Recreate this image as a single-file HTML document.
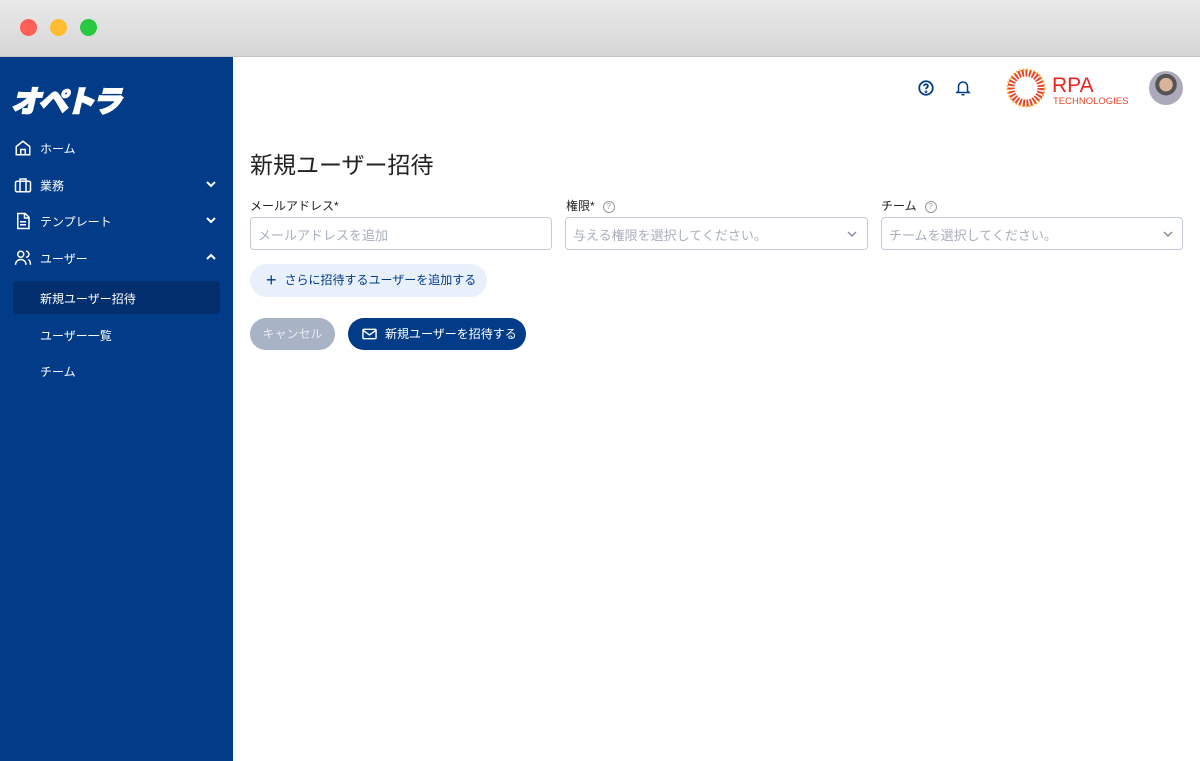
<!DOCTYPE html>
<html><head><meta charset="utf-8"><style>
*{box-sizing:border-box;margin:0;padding:0}
body{width:1200px;height:761px;overflow:hidden;background:#fff;font-family:"Liberation Sans","Noto Sans CJK JP",sans-serif;position:relative}
.bar{position:absolute;left:0;top:0;width:1200px;height:57px;background:linear-gradient(#e9e9e9,#d6d6d6);border-bottom:1px solid #c4c4c4}
.dot{position:absolute;top:19px;width:17px;height:17px;border-radius:50%}
.side{position:absolute;left:0;top:57px;width:233px;height:704px;background:#023c89}
.nav{position:absolute;left:14px;color:#fff;font-size:12px;display:flex;align-items:center}
.nav svg{margin-right:8px}
.chev{position:absolute;left:205px}
.sub{position:absolute;left:40px;color:#fff;font-size:12px}
.lbl{position:absolute;font-size:12px;color:#222}
.inp{position:absolute;top:217px;height:33px;border:1px solid #c5ccd6;border-radius:4px;font-size:13px;color:#a8b0bc;padding:7px 7px}
.q{display:inline-block;width:12px;height:12px;border:1px solid #999;border-radius:50%;font-size:8px;text-align:center;line-height:10px;color:#999;margin-left:8px;vertical-align:1px}
</style></head><body>
<div class="bar"></div>
<div class="dot" style="left:20px;background:#fe5f57"></div>
<div class="dot" style="left:50px;background:#febc2e"></div>
<div class="dot" style="left:80px;background:#28c840"></div>
<div class="side">
<div style="position:absolute;left:14px;top:20px;color:#fff;font-size:30px;font-weight:900;letter-spacing:-3px;transform:skewX(-14deg);-webkit-text-stroke:1.5px #fff">オペトラ</div>
<div class="nav" style="top:82px"><svg width="18" height="18" viewBox="0 0 24 24" fill="none" stroke="#fff" stroke-width="2"><path d="M3 10l9-7 9 7v11H3z M9 21v-7h6v7"/></svg>ホーム</div>
<div class="nav" style="top:119px"><svg width="18" height="18" viewBox="0 0 24 24" fill="none" stroke="#fff" stroke-width="2"><rect x="2" y="7" width="20" height="14" rx="2"/><path d="M8 7V4h8v3M8 7v14M16 7v14"/></svg>業務</div>
<div class="nav" style="top:155px"><svg width="18" height="18" viewBox="0 0 24 24" fill="none" stroke="#fff" stroke-width="2"><path d="M5 2h10l5 5v15H5z M14 2v6h6 M8 13h8M8 17h8"/></svg>テンプレート</div>
<div class="nav" style="top:192px"><svg width="18" height="18" viewBox="0 0 24 24" fill="none" stroke="#fff" stroke-width="2"><circle cx="9" cy="7" r="4"/><path d="M2 21c0-4 3-7 7-7s7 3 7 7M16 3a4 4 0 010 8M19 14c2 1 3 4 3 7"/></svg>ユーザー</div>
<svg class="chev" style="top:121px" width="12" height="12" viewBox="0 0 12 12" fill="none" stroke="#fff" stroke-width="2"><path d="M2 4l4 4 4-4"/></svg>
<svg class="chev" style="top:157px" width="12" height="12" viewBox="0 0 12 12" fill="none" stroke="#fff" stroke-width="2"><path d="M2 4l4 4 4-4"/></svg>
<svg class="chev" style="top:194px" width="12" height="12" viewBox="0 0 12 12" fill="none" stroke="#fff" stroke-width="2"><path d="M2 8l4-4 4 4"/></svg>
<div style="position:absolute;left:13px;top:224px;width:207px;height:33px;background:#032f6e;border-radius:4px"></div>
<div class="sub" style="top:233px">新規ユーザー招待</div>
<div class="sub" style="top:270px">ユーザー一覧</div>
<div class="sub" style="top:306px">チーム</div>
</div>
<svg style="position:absolute;left:917px;top:79px" width="18" height="18" viewBox="0 0 24 24" fill="none" stroke="#023c89" stroke-width="2.4"><circle cx="12" cy="12" r="9"/><path d="M9.5 9.5a2.5 2.5 0 115 0c0 2-2.5 2-2.5 4"/><circle cx="12" cy="17" r=".6"/></svg>
<svg style="position:absolute;left:954px;top:79px" width="18" height="18" viewBox="0 0 24 24" fill="none" stroke="#023c89" stroke-width="2"><path d="M6 16V10a6 6 0 0112 0v6l2 2H4z M10 21h4"/></svg>
<svg style="position:absolute;left:1006px;top:68px" width="40" height="40" viewBox="0 0 40 40"><circle cx="20" cy="20" r="15" fill="none" stroke="#e8452a" stroke-width="7" stroke-dasharray="2 1.5"/><circle cx="20" cy="20" r="18.5" fill="none" stroke="#f5a623" stroke-width="2" stroke-dasharray="1.5 2"/></svg>
<div style="position:absolute;left:1052px;top:75px;color:#e8231f;font-size:21px;line-height:21px">RPA</div>
<div style="position:absolute;left:1053px;top:96px;color:#e8452a;font-size:9.5px">TECHNOLOGIES</div>
<div style="position:absolute;left:1149px;top:71px;width:34px;height:34px;border-radius:50%;background:radial-gradient(circle at 50% 40%,#d9b49a 0 25%,#555 26% 40%,#aab 41%)"></div>
<div style="position:absolute;left:250px;top:146px;font-size:23px;color:#222">新規ユーザー招待</div>
<div class="lbl" style="left:250px;top:197px">メールアドレス*</div>
<div class="lbl" style="left:566px;top:197px">権限*<span class="q">?</span></div>
<div class="lbl" style="left:881px;top:197px">チーム<span class="q">?</span></div>
<div class="inp" style="left:250px;width:302px">メールアドレスを追加</div>
<div class="inp" style="left:565px;width:303px">与える権限を選択してください。</div>
<div class="inp" style="left:881px;width:302px">チームを選択してください。</div>
<svg style="position:absolute;left:846px;top:228px" width="12" height="12" viewBox="0 0 12 12" fill="none" stroke="#889" stroke-width="1.4"><path d="M2 4l4 4 4-4"/></svg>
<svg style="position:absolute;left:1162px;top:228px" width="12" height="12" viewBox="0 0 12 12" fill="none" stroke="#889" stroke-width="1.4"><path d="M2 4l4 4 4-4"/></svg>
<div style="position:absolute;left:250px;top:264px;width:237px;height:33px;border-radius:17px;background:#e8f0fb;color:#023c89;font-size:12px;line-height:33px;padding-left:16px"><span style="font-size:18px;vertical-align:-2px;margin-right:8px">+</span>さらに招待するユーザーを追加する</div>
<div style="position:absolute;left:250px;top:318px;width:85px;height:32px;border-radius:16px;background:#a9b3c6;color:#e8ecf2;font-size:12px;line-height:32px;text-align:center">キャンセル</div>
<div style="position:absolute;left:348px;top:318px;width:178px;height:32px;border-radius:16px;background:#023c89;color:#fff;font-size:12px;line-height:32px;padding-left:14px"><svg width="15" height="12" viewBox="0 0 16 12" fill="none" stroke="#fff" stroke-width="1.5" style="vertical-align:-2px;margin-right:8px"><rect x="1" y="1" width="14" height="10" rx="1"/><path d="M1 2l7 5 7-5"/></svg>新規ユーザーを招待する</div>
</body></html>
